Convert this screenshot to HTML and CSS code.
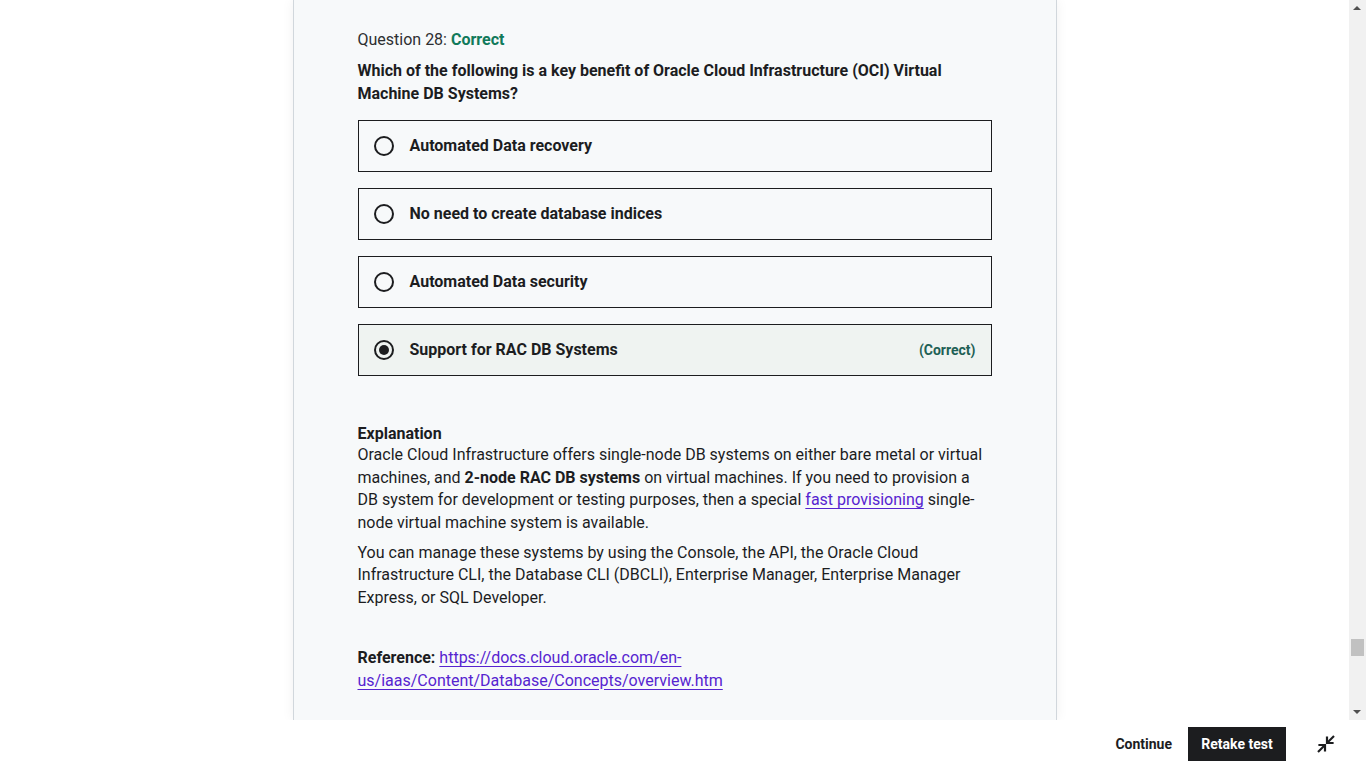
FILE: index.html
```html
<!DOCTYPE html>
<html lang="en">
<head>
<meta charset="utf-8">
<title>Quiz result</title>
<link rel="stylesheet" href="styles.css">
</head>
<body>
<div class="app">
  <div class="main">
    <div class="viewport">
      <div class="panel">
        <div class="q-head">Question 28: <span class="q-status">Correct</span></div>
        <div class="q-text">Which of the following is a key benefit of Oracle Cloud Infrastructure (OCI) Virtual Machine DB Systems?</div>
        <ul class="options">
          <li class="option"><span class="radio"></span><span class="opt-label">Automated Data recovery</span></li>
          <li class="option"><span class="radio"></span><span class="opt-label">No need to create database indices</span></li>
          <li class="option"><span class="radio"></span><span class="opt-label">Automated Data security</span></li>
          <li class="option option-correct"><span class="radio radio-on"></span><span class="opt-label">Support for RAC DB Systems</span><span class="opt-tag">(Correct)</span></li>
        </ul>
        <div class="explanation">
          <div class="exp-title">Explanation</div>
          <p>Oracle Cloud Infrastructure offers single-node DB systems on either bare metal or virtual machines, and <b>2-node RAC DB systems</b> on virtual machines. If you need to provision a DB system for development or testing purposes, then a special <a href="#">fast provisioning</a> single-node virtual machine system is available.</p>
          <p>You can manage these systems by using the Console, the API, the Oracle Cloud Infrastructure CLI, the Database CLI (DBCLI), Enterprise Manager, Enterprise Manager Express, or SQL Developer.</p>
          <p class="ref"><b>Reference:</b> <a href="#">https://docs.cloud.oracle.com/en-us/iaas/Content/Database/Concepts/overview.htm</a></p>
        </div>
      </div>
    </div>
    <div class="scrollbar">
      <div class="sb-arrow sb-up"></div>
      <div class="sb-track"><div class="sb-thumb"></div></div>
      <div class="sb-arrow sb-down"></div>
    </div>
  </div>
  <div class="footer">
    <button class="btn btn-ghost">Continue</button>
    <button class="btn btn-dark">Retake test</button>
    <button class="btn-icon" aria-label="Exit fullscreen">
      <svg width="20" height="20" viewBox="0 0 20 20" fill="none" stroke="#1c1d1f" stroke-width="2.2">
        <path d="M18 2 L11.5 8.5" />
        <path d="M11 3.5 V9 H16.5" stroke-linecap="square"/>
        <path d="M2 18 L8.5 11.5" />
        <path d="M3.5 11 H9 V16.5" stroke-linecap="square"/>
      </svg>
    </button>
  </div>
</div>
</body>
</html>
```

FILE: styles.css
```css
* { box-sizing: border-box; }
html, body { margin: 0; padding: 0; }
body {
  font-family: Roboto, "Liberation Sans", sans-serif;
  color: #1c1d1f;
  background: #fff;
  width: 1366px;
  height: 768px;
  overflow: hidden;
}
.app { display: flex; flex-direction: column; height: 768px; }
.main { display: flex; height: 720px; }
.viewport {
  flex: 1;
  overflow: hidden;
  display: flex;
  justify-content: center;
}
.panel {
  width: 764px;
  height: 720px;
  background: #f7f9fa;
  border-left: 1px solid #d1d7dc;
  border-right: 1px solid #d1d7dc;
  box-shadow: 0 0 12px rgba(0,0,0,0.06);
  padding: 29px 64px 0 64px;
}
.q-head {
  font-size: 16px;
  line-height: 22px;
  color: #2d2f31;
}
.q-status { font-weight: 700; color: #117a5a; }
.q-text {
  margin-top: 8px;
  font-size: 16px;
  font-weight: 700;
  line-height: 23px;
}
.options {
  list-style: none;
  margin: 15px 0 0 0;
  padding: 0;
  display: flex;
  flex-direction: column;
  gap: 16px;
}
.option {
  height: 52px;
  border: 1px solid #1c1d1f;
  display: flex;
  align-items: center;
  padding: 0 15px 1px 15px;
  font-size: 16px;
  font-weight: 700;
}
.option-correct { background: #eff3f1; }
.radio {
  width: 20px;
  height: 20px;
  border: 2px solid #1c1d1f;
  border-radius: 50%;
  margin-right: 16px;
  flex: none;
  display: flex;
  align-items: center;
  justify-content: center;
}
.radio-on::after {
  content: "";
  width: 10px;
  height: 10px;
  border-radius: 50%;
  background: #1c1d1f;
}
.opt-label { flex: 1; }
.opt-tag { font-size: 14px; font-weight: 700; color: #1e6055; }
.explanation {
  margin-top: 47px;
  font-size: 16px;
  line-height: 22.4px;
  color: #1c1d1f;
}
.exp-title { font-weight: 700; margin-bottom: -1px; }
.explanation p { margin: 0 0 8px 0; }
.explanation .ref { margin-top: 38px; }
.explanation a { color: #5624d0; text-decoration: underline; text-underline-offset: 3px; }
.scrollbar {
  width: 17px;
  background: #f1f1f1;
  display: flex;
  flex-direction: column;
}
.sb-arrow { height: 17px; position: relative; }
.sb-up::after, .sb-down::after {
  content: "";
  position: absolute;
  left: 4px;
  width: 0; height: 0;
  border-left: 4px solid transparent;
  border-right: 4px solid transparent;
}
.sb-up::after { top: 6px; border-bottom: 4px solid #505050; }
.sb-down::after { top: 7px; border-top: 4px solid #505050; }
.sb-track { flex: 1; position: relative; }
.sb-thumb {
  position: absolute;
  left: 2px;
  right: 2px;
  top: 622px;
  height: 17px;
  background: #c1c1c1;
}
.footer {
  height: 48px;
  background: #fff;
  display: flex;
  align-items: center;
  justify-content: flex-end;
  padding-right: 20px;
}
.btn {
  font-family: Roboto, "Liberation Sans", sans-serif;
  font-size: 14px;
  font-weight: 700;
  height: 34px;
  border: none;
  cursor: pointer;
}
.btn-ghost { background: transparent; color: #1c1d1f; padding: 0 16px; }
.btn-dark { background: #1c1d1f; color: #fff; padding: 0 12px; width: 98px; }
.btn-icon {
  margin-left: 20px;
  width: 40px;
  height: 34px;
  background: transparent;
  border: none;
  display: flex;
  align-items: center;
  justify-content: center;
  padding: 0;
}
```
